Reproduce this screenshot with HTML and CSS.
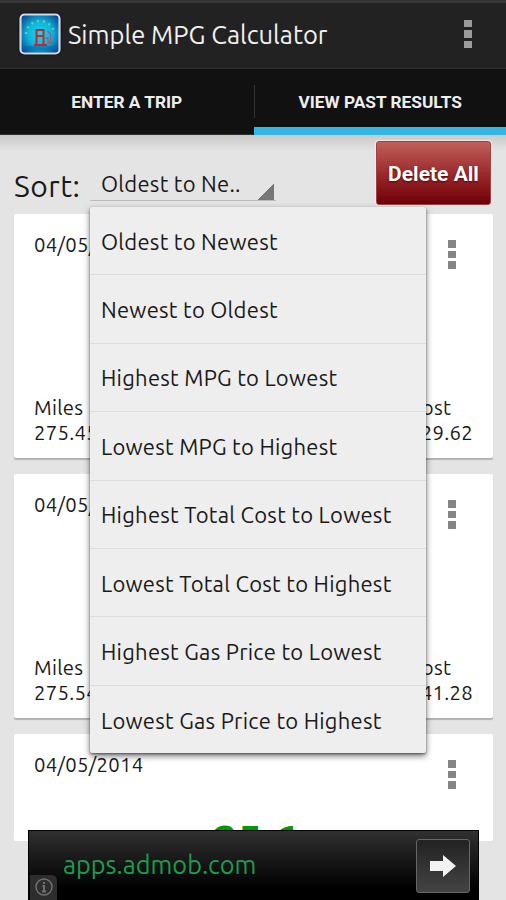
FILE: index.html
```html
<!DOCTYPE html>
<html lang="en">
<head>
  <meta charset="UTF-8" />
  <meta name="viewport" content="width=device-width, initial-scale=1.0" />
  <title>Simple MPG Calculator</title>
  <link rel="stylesheet" href="styles.css">
</head>
<body>
  <div class="app">
    <header class="action-bar">
      <svg class="logo" width="42" height="42" viewBox="0 0 42 42">
        <defs>
          <radialGradient id="glow" cx="50%" cy="50%" r="62%">
            <stop offset="0" stop-color="#14d8ee" />
            <stop offset="0.5" stop-color="#0fb4dc" />
            <stop offset="1" stop-color="#064a94" />
          </radialGradient>
        </defs>
        <rect x="1.5" y="1.5" width="39" height="39" rx="4" fill="url(#glow)" stroke="#d5d8e4" stroke-width="2.2" />
        <path d="M7 21a14 13 0 0 1 28 0" fill="none" stroke="#7fdc9a" stroke-width="2.5" stroke-dasharray="2 4" opacity="0.7" />
        <path d="M3 35h36" stroke="#0764a8" stroke-width="4" opacity="0.5" />
        <path d="M17.500 32V17h7v15M15 32h13M17.500 23h7" fill="none" stroke="#c3282d" stroke-width="2" />
        <path d="M26 25h3v5h2.500V21l-3-3" fill="none" stroke="#936078" stroke-width="1.300" />
      </svg>
      <h1>Simple MPG Calculator</h1>
      <span class="dots"><i></i><i></i><i></i></span>
    </header>

    <nav class="tabs">
      <a class="tab"><span>ENTER A TRIP</span></a>
      <a class="tab active"><span>VIEW PAST RESULTS</span></a>
    </nav>

    <main class="content">
      <div class="sort-row">
        <label>Sort:</label>
        <div class="spinner">
          <span>Oldest to Ne..</span>
          <ul class="menu">
            <li><span>Oldest to Newest</span></li>
            <li><span>Newest to Oldest</span></li>
            <li><span>Highest MPG to Lowest</span></li>
            <li><span>Lowest MPG to Highest</span></li>
            <li><span>Highest Total Cost to Lowest</span></li>
            <li><span>Lowest Total Cost to Highest</span></li>
            <li><span>Highest Gas Price to Lowest</span></li>
            <li><span>Lowest Gas Price to Highest</span></li>
          </ul>
        </div>
        <button class="delete">Delete All</button>
      </div>

      <div class="results">
        <div class="card">
          <div class="card-top">
            <span>04/05/2014</span>
            <span class="dots"><i></i><i></i><i></i></span>
          </div>
          <div class="card-stats">
            <div>Miles<br>275.45</div>
            <div class="cost">Cost<br>$29.62</div>
          </div>
        </div>
        <div class="card">
          <div class="card-top">
            <span>04/05/2014</span>
            <span class="dots"><i></i><i></i><i></i></span>
          </div>
          <div class="card-stats">
            <div>Miles<br>275.54</div>
            <div class="cost">Cost<br>$41.28</div>
          </div>
        </div>
        <div class="card last">
          <div class="card-top">
            <span>04/05/2014</span>
            <span class="dots"><i></i><i></i><i></i></span>
          </div>
          <div class="mpg">25.6</div>
        </div>
      </div>
    </main>

    <!-- Ad banner -->
    <div class="ad">
      <svg class="ad-info" width="28" height="25" viewBox="0 0 28 25">
        <path d="M0 0h21q6 0 6 6v19H0z" fill="#2d2d2d" />
        <circle cx="14" cy="12" r="8" fill="none" stroke="#707070" stroke-width="1.500" />
        <path d="M14 7v2M12.500 11H14v5M12 16.500h4" fill="none" stroke="#707070" stroke-width="2" />
      </svg>
      <span class="ad-text">apps.admob.com</span>
      <span class="ad-go">
        <svg width="28" height="24" viewBox="0 0 28 24">
          <path d="M1 7h13V1l13 11-13 11v-6H1z" fill="#f2f2f2" />
        </svg>
      </span>
    </div>
  </div>
</body>
</html>
```

FILE: styles.css
```css
* {
  box-sizing: border-box;
}
body {
  margin: 0;
  font-family: "Ubuntu", "Noto Sans", sans-serif;
  color: #1a1a1a;
}
.app {
  position: relative;
  width: 506px;
  height: 900px;
  overflow: hidden;
  background: #e4e4e4;
}
.action-bar {
  display: flex;
  align-items: center;
  height: 69px;
  padding: 0 34px 3px 19px;
  background: #222;
  border-top: 3px solid #363636;
  border-bottom: 1px solid #2d2d2d;
}
.logo {
  filter: drop-shadow(0 0 1px #000);
}
.action-bar h1 {
  flex: 1;
  margin: 0 0 0 7px;
  font-size: 25.5px;
  font-weight: 400;
  color: #f0f0f0;
  white-space: nowrap;
}
.dots {
  display: flex;
  flex-direction: column;
  gap: 3px;
}
.dots i {
  width: 8px;
  height: 7.5px;
  background: #858585;
}
.action-bar .dots i {
  background: #9b9b9b;
}

.tabs {
  display: flex;
  height: 66px;
  background: #111;
}
.tab {
  flex: 1;
  display: flex;
  align-items: center;
  justify-content: center;
  padding: 1px 0 0 1px;
  font-family: Roboto, sans-serif;
  font-size: 17.3px;
  font-weight: 700;
  color: #eee;
  border-bottom: 1px solid #333;
}
.tab.active {
  margin-left: 1px;
  border-bottom: 8px solid #33b5e5;
  padding-top: 8px;
  background: linear-gradient(#333, #333) 0 16px / 1px 33px no-repeat;
}

.content {
  height: 765px;
  background: linear-gradient(#c9c9c9, #e4e4e4 16px);
}
.sort-row {
  display: flex;
  height: 79px;
  padding: 6px 15px 0 14px;
}
.sort-row label {
  width: 76px;
  padding-top: 24px;
  font-size: 30px;
  line-height: 42px;
  letter-spacing: 0.5px;
}
.spinner {
  position: relative;
  width: 186px;
  height: 60px;
  padding: 28px 0 0 11px;
  font-size: 22px;
  line-height: 30px;
  letter-spacing: 0.25px;
  border-bottom: 1px solid #bbb;
  background: linear-gradient(135deg, transparent 50%, #777 50%) 168px 43px / 16px 16px no-repeat;
}
.menu {
  position: absolute;
  z-index: 2;
  top: 66px;
  left: 0;
  width: 336px;
  height: 546px;
  margin: 0;
  padding: 0;
  list-style: none;
  background: #eee;
  border-radius: 2px;
  box-shadow: 0 3px 6px rgba(0,0,0,0.55), 0 1px 2px rgba(0,0,0,0.4);
}
.menu li {
  display: flex;
  align-items: center;
  height: 68.4px;
  padding: 2px 0 0 11px;
  border-bottom: 1px solid #dedede;
}
.menu li:last-child {
  border-bottom: none;
}
.delete {
  width: 115px;
  height: 64px;
  margin-left: auto;
  padding: 2px 0 0;
  font-family: Roboto, sans-serif;
  font-size: 21px;
  font-weight: 700;
  color: #fff;
  text-shadow: 0 1px 2px #500;
  background: linear-gradient(#c0605a, #9c2b2d 50%, #6e0007);
  border: 1px solid #a04040;
  border-radius: 3px;
  box-shadow: 0 0 1px 1px #f2eaea;
}

.results {
  display: flex;
  flex-direction: column;
  gap: 16px;
  padding: 0 13px 0 14px;
}
.card {
  display: flex;
  flex-direction: column;
  justify-content: space-between;
  height: 244px;
  padding: 18px 20px 13px;
  font-size: 20.3px;
  line-height: 25px;
  letter-spacing: 0.3px;
  background: #fff;
  border-radius: 2px;
  box-shadow: 0 2px 1px rgba(0,0,0,0.22);
}
.card-top, .card-stats {
  display: flex;
  justify-content: space-between;
}
.card-top .dots {
  margin: 8px 17px 0 0;
}
.card.last {
  height: 107px;
  padding-bottom: 0;
  overflow: hidden;
  box-shadow: none;
}
.mpg {
  height: 22px;
  padding-left: 3px;
  font-size: 43px;
  font-weight: 700;
  line-height: 42px;
  letter-spacing: 0;
  text-align: center;
  color: #090;
}

.ad {
  position: absolute;
  left: 28px;
  bottom: 0;
  display: flex;
  align-items: center;
  width: 451px;
  height: 70px;
  padding: 0 8px 0 1px;
  background: linear-gradient(#303030, #000 85%);
  border: 1px solid #000;
  border-bottom: none;
}
.ad-info {
  align-self: flex-end;
}
.ad-text {
  flex: 1;
  margin: -3px 0 0 5px;
  font-size: 25.3px;
  color: #1c9c50;
}
.ad-go {
  display: flex;
  align-items: center;
  justify-content: center;
  width: 54px;
  height: 54px;
  background: linear-gradient(#222, #444);
  border: 1px solid #666;
  border-radius: 3px;
}
```
